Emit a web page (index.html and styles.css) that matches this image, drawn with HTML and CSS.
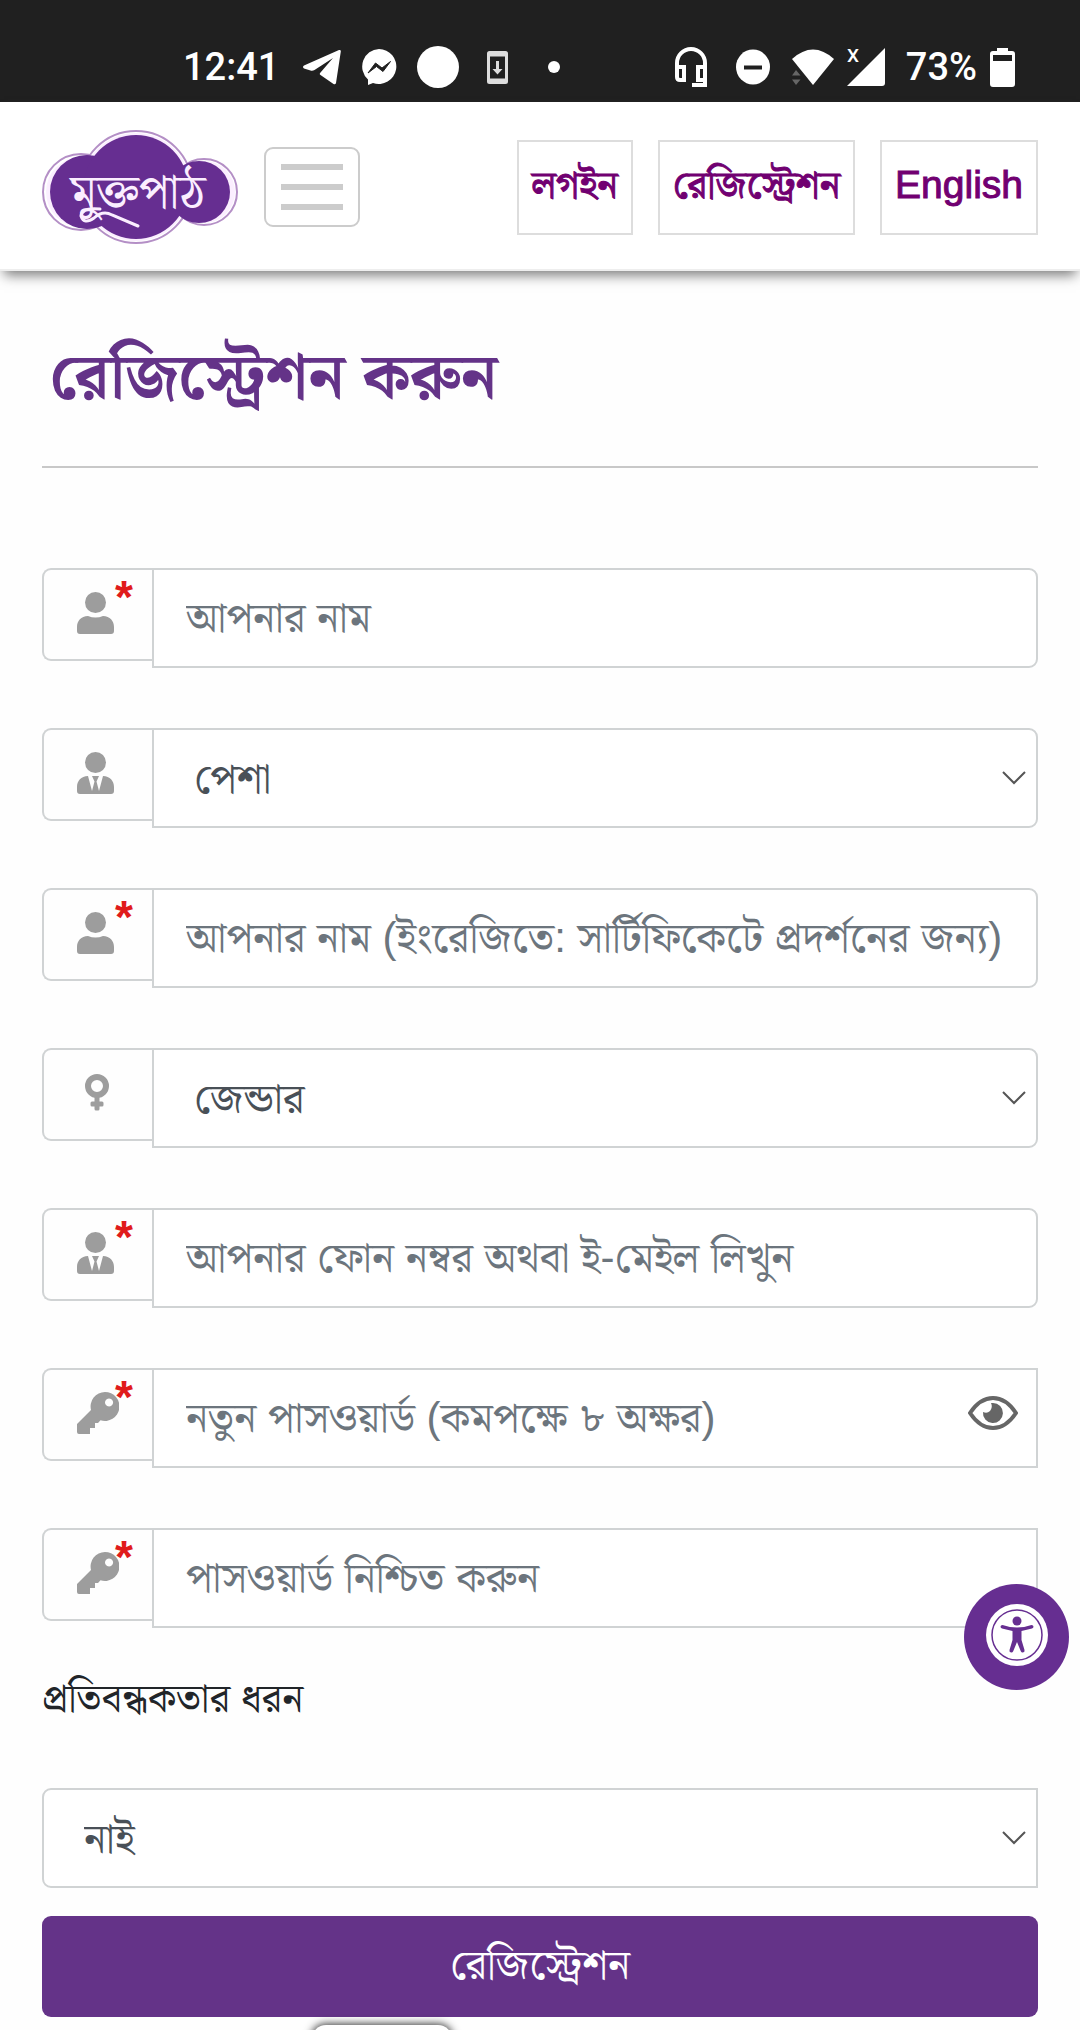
FILE: index.html
```html
<!DOCTYPE html>
<html lang="bn">
<head>
  <meta charset="UTF-8">
  <meta name="viewport" content="width=device-width, initial-scale=1">
  <title>রেজিস্ট্রেশন করুন</title>
  <link rel="stylesheet" href="styles.css">
</head>
<body>

<svg class="sprite" aria-hidden="true">
  <symbol id="user" viewBox="0 0 37 42">
    <circle cx="18.500" cy="10.500" r="10.500"/>
    <path d="M11 24q7.500 3 15 0c7 0 11 5 11 11v4q0 3-3 3H3q-3 0-3-3v-4c0-6 4-11 11-11z"/>
  </symbol>
  <symbol id="tie" viewBox="0 0 37 42">
    <circle cx="18.500" cy="10.500" r="10.500"/>
    <path d="M11 24l4 15 2.500-9.500L15 24h7l-2.500 5.500L22 39l4-15c7 0 11 5 11 11v4q0 3-3 3H3q-3 0-3-3v-4c0-6 4-11 11-11z"/>
    <path d="M18.500 30l-3 12h6z"/>
  </symbol>
  <symbol id="key" viewBox="0 0 42 42">
    <path fill-rule="evenodd" d="M28 0a14.500 14.500 0 1 1-4.500 28.300L21 31h-3v5h-5v6H2q-2 0-2-2v-8l14-14A14.500 14.500 0 0 1 28 0zm4 6.500a4 4 0 1 0 0.100 0z"/>
  </symbol>
  <symbol id="female" viewBox="0 0 24 37">
    <circle cx="12" cy="12" r="9" fill="none" stroke="currentColor" stroke-width="6"/>
    <path d="M9.500 22h5v5.500H17q1.500 0 1.500 1.500v2q0 1.500-1.500 1.500h-2.500V35q0 1.500-1.500 1.500h-2q-1.500 0-1.500-1.500v-2.500H7q-1.500 0-1.500-1.500v-2q0-1.500 1.500-1.500h2.500z"/>
  </symbol>
</svg>

<div class="status">
  <div class="status-left">
    <span class="clock">12:41</span>
    <svg width="38" height="36" viewBox="0 0 38 36"><path d="M1 16.500L36 1q2-.5 1.800 1.500L33 34q-.6 2-2.500 1L17.500 26q-1.500-1 0-2.500L30 9 11.500 21q-2 1.200-4 .5L1 19.500q-2-1.500 0-3z"/></svg>
    <svg width="36" height="36" viewBox="0 0 36 36"><path d="M18 0a17.500 17.500 0 1 1-6 34l-5 2V30.500A17.500 17.500 0 0 1 18 0z"/><path d="M7 24l7.500-10 6.500 5 8.500-6.500-7.500 10-6.500-5z" fill="#202020" stroke="#202020"/></svg>
    <svg width="42" height="42" viewBox="0 0 42 42"><circle cx="21" cy="21" r="21"/></svg>
    <svg class="update" width="21" height="33" viewBox="0 0 21 33"><path fill-rule="evenodd" d="M2.500 0h16Q21 0 21 2.500v28Q21 33 18.500 33h-16Q0 33 0 30.500v-28Q0 0 2.500 0zM3 5.500v22h15v-22z"/><path d="M9 10h3v8h3.500l-5 5.500-5-5.500H9z"/></svg>
    <svg class="dot" width="12" height="12" viewBox="0 0 12 12"><circle cx="6" cy="6" r="6"/></svg>
  </div>
  <div class="status-right">
    <svg width="32" height="40" viewBox="0 0 32 40"><path d="M2 20v-4a14 14 0 0 1 28 0v22H17M2 20h7v13H5q-3 0-3-3zm28 0h-7v13h7" fill="none" stroke="#fff" stroke-width="4"/></svg>
    <svg class="dnd" width="34" height="36" viewBox="0 0 34 36"><ellipse cx="17" cy="18" rx="17" ry="17.500"/><path d="M8 16.500h18v4H8z" fill="#202020"/></svg>
    <svg class="wifi" width="42" height="36" viewBox="0 0 42 36"><path d="M0 10Q21-9 42 10L21 36z"/><path d="M4 21l4.500 5.500H0zM4 36l4.500-5.500H0z" fill="#666"/></svg>
    <svg class="signal" width="38" height="40" viewBox="0 0 38 40"><path d="M38 1v35q0 3-3 3H0z"/><text x="0" y="15" font-size="19">X</text></svg>
    <span class="percent">73%</span>
    <svg width="25" height="39" viewBox="0 0 25 39"><path fill-rule="evenodd" d="M7 0h11v3h4q3 0 3 3v30q0 3-3 3H3q-3 0-3-3V6q0-3 3-3h4zM3 7v6h19V7z"/></svg>
  </div>
</div>

<header class="navbar">
  <a href="#" class="logo" aria-label="মুক্তপাঠ">
    <svg width="196" height="115" viewBox="0 0 196 115">
      <g fill="#fff" stroke="#b48fc6" stroke-width="2">
        <circle cx="39" cy="62" r="38"/><circle cx="162" cy="62" r="33"/><ellipse cx="94" cy="57" rx="56" ry="56"/>
      </g>
      <g fill="#fbeeff"><circle cx="39" cy="62" r="35"/><circle cx="162" cy="62" r="31"/><circle cx="94" cy="57" r="54"/></g>
      <g fill="#662e91"><circle cx="45" cy="62" r="37"/><circle cx="157" cy="62" r="31"/><circle cx="94" cy="57" r="52"/></g>
      <text class="logo-text" x="96" y="78" text-anchor="middle">মুক্তপাঠ</text>
      <path d="M58 79q-18-2-19 7 3 9 13 2 9-8 18-3l26 11" fill="none" stroke="#fbeeff" stroke-width="3" stroke-linecap="round"/>
    </svg>
  </a>
  <button class="toggler" type="button" aria-label="মেনু"><span></span><span></span><span></span></button>
  <nav class="links">
    <a href="#">লগইন</a>
    <a href="#">রেজিস্ট্রেশন</a>
    <a href="#">English</a>
  </nav>
</header>

<main class="container">
  <h1>রেজিস্ট্রেশন করুন</h1>
  <form>
    <div class="group">
      <label class="addon" for="name"><svg width="37" height="42"><use href="#user"/></svg><span class="req">*</span></label>
      <input class="control" id="name" type="text" placeholder="আপনার নাম">
    </div>
    <div class="group">
      <label class="addon" for="job"><svg width="37" height="42"><use href="#tie"/></svg></label>
      <select class="control" id="job"><option>পেশা</option></select>
    </div>
    <div class="group">
      <label class="addon" for="name_en"><svg width="37" height="42"><use href="#user"/></svg><span class="req">*</span></label>
      <input class="control" id="name_en" type="text" placeholder="আপনার নাম (ইংরেজিতে: সার্টিফিকেটে প্রদর্শনের জন্য)">
    </div>
    <div class="group">
      <label class="addon gender" for="gender"><svg width="24" height="37"><use href="#female"/></svg></label>
      <select class="control" id="gender"><option>জেন্ডার</option></select>
    </div>
    <div class="group">
      <label class="addon" for="contact"><svg width="37" height="42"><use href="#tie"/></svg><span class="req">*</span></label>
      <input class="control" id="contact" type="text" placeholder="আপনার ফোন নম্বর অথবা ই-মেইল লিখুন">
    </div>
    <div class="group">
      <label class="addon" for="password"><svg width="42" height="42"><use href="#key"/></svg><span class="req">*</span></label>
      <input class="control square" id="password" type="password" placeholder="নতুন পাসওয়ার্ড (কমপক্ষে ৮ অক্ষর)">
      <button class="eye" type="button" aria-label="পাসওয়ার্ড দেখুন">
        <svg width="50" height="34" viewBox="0 0 50 34"><path d="M2 17Q12 2 25 2t23 15Q38 32 25 32T2 17z" fill="none" stroke="#666" stroke-width="4"/><path d="M25 7a10 10 0 1 1-10 9q4 2 7-1 3-4 1-8z" fill="#666"/></svg>
      </button>
    </div>
    <div class="group">
      <label class="addon" for="confirm"><svg width="42" height="42"><use href="#key"/></svg><span class="req">*</span></label>
      <input class="control square" id="confirm" type="password" placeholder="পাসওয়ার্ড নিশ্চিত করুন">
    </div>

    <label class="title" for="disability">প্রতিবন্ধকতার ধরন</label>
    <select class="control disability" id="disability"><option>নাই</option></select>
    <button class="submit" type="submit">রেজিস্ট্রেশন</button>
  </form>
</main>

<button class="access" type="button" aria-label="Accessibility">
  <svg width="62" height="62" viewBox="0 0 62 62">
    <circle cx="31" cy="31" r="31" fill="#fff"/>
    <circle cx="31" cy="31" r="25" fill="none" stroke="#662e91" stroke-width="1.500"/>
    <g fill="#662e91"><circle cx="31" cy="17" r="4.500"/><path d="M16.500 21q7.500 2.500 14.500 2.500T45.500 21q2 0 2 1.800 0 1.200-1.500 1.700L35.500 27v9l3 10q.5 2-1.500 2.500-1.500.3-2.200-1.200L31 38l-3.800 9.300q-.7 1.500-2.200 1.200-2-.5-1.500-2.500l3-10v-9L16 24.500q-1.500-.5-1.500-1.700 0-1.800 2-1.800z"/></g>
  </svg>
</button>
<div class="sheet"></div>

</body>
</html>
```
FILE: styles.css
```css
* {
  box-sizing: border-box;
}
body {
  margin: 0;
  background: #fefefe;
  font-family: "Liberation Sans", "Noto Serif Bengali", "Noto Sans Bengali", sans-serif;
  font-size: 42px;
  color: #212529;
  overflow: hidden;
}
.sprite {
  display: none;
}

/* phone status bar */
.status {
  display: flex;
  justify-content: space-between;
  height: 102px;
  padding: 32px 65px 0 183px;
  background: #202020;
  color: #fff;
  fill: #fff;
  font: 500 38px Roboto, sans-serif;
}
.status-left, .status-right {
  display: flex;
  align-items: center;
}
.status-left {
  gap: 20px;
}
.clock {
  margin-right: 4px;
}
.update {
  fill: #ddd;
  margin: 0 20px 0 8px;
}
.status-right {
  gap: 13px;
}
.dnd {
  margin: 0 9px 0 16px;
}
.signal {
  overflow: visible;
}
.percent {
  margin-left: 8px;
}

/* header */
.navbar {
  display: flex;
  align-items: center;
  height: 169px;
  padding: 3px 42px 0;
  background: #fff;
  border-bottom: 2px solid #eee;
  box-shadow: 0 8px 12px -4px #777;
}
.logo svg {
  display: block;
}
.logo-text {
  fill: #fbeeff;
  font-size: 48px;
}
.toggler {
  display: flex;
  flex-direction: column;
  justify-content: space-between;
  width: 96px;
  height: 80px;
  margin-left: 26px;
  padding: 15px;
  border: 2px solid #ccc;
  border-radius: 9px;
  background: #fff;
}
.toggler span {
  height: 6px;
  background: #ccc;
}
.links {
  display: flex;
  gap: 25px;
  margin-left: auto;
}
.links a {
  height: 95px;
  padding: 0 13px;
  border: 2px solid #ddd;
  font-size: 39px;
  line-height: 86px;
  color: #710071;
  text-decoration: none;
  -webkit-text-stroke: 1px #710071;
}

/* form */
.container {
  padding: 0 42px;
}
h1 {
  height: 197px;
  margin: 0 0 100px;
  padding: 0 8px;
  border-bottom: 2px solid #c8c8c8;
  font-size: 64px;
  line-height: 210px;
  color: #643388;
}
.group {
  display: flex;
  align-items: flex-start;
  position: relative;
  margin-bottom: 60px;
}
.addon {
  display: flex;
  position: relative;
  flex: none;
  width: 110px;
  height: 93px;
  padding: 22px 0 0 33px;
  border: 2px solid #d0d3d4;
  border-right: 0;
  border-radius: 9px 0 0 9px;
  color: #9d9d9d;
  fill: #9d9d9d;
}
.gender {
  padding: 24px 0 0 41px;
}
.req {
  position: absolute;
  top: 6px;
  left: 71px;
  font-size: 46px;
  font-weight: bold;
  line-height: 42px;
  color: #e01b1b;
}
.control {
  flex: 1;
  min-width: 0;
  height: 100px;
  padding: 0 32px;
  border: 2px solid #d0d3d4;
  border-radius: 0 9px 9px 0;
  background: #fff;
  font: inherit;
  color: #495057;
}
.control::placeholder {
  color: #6c757d;
  opacity: 1;
}
.square {
  border-radius: 0;
}
select.control {
  appearance: none;
  padding: 0 40px;
  background: #fff url("data:image/svg+xml,%3Csvg xmlns='http://www.w3.org/2000/svg' width='24' height='14'%3E%3Cpath d='M1 1l11 11L23 1' fill='none' stroke='%23555' stroke-width='2'/%3E%3C/svg%3E") no-repeat right 10px center;
}
.eye {
  position: absolute;
  top: 28px;
  right: 20px;
  padding: 0;
  border: 0;
  background: none;
}
.eye svg {
  display: block;
}
.title {
  display: block;
  height: 130px;
  margin-top: -30px;
  font-size: 40px;
  line-height: 80px;
}
select.disability {
  display: block;
  width: 100%;
  border-radius: 9px 0 0 9px;
}
.submit {
  display: block;
  width: 100%;
  height: 101px;
  margin-top: 28px;
  border: 0;
  border-radius: 9px;
  background: #643388;
  font: inherit;
  color: #fff;
}

/* floating parts */
.access {
  position: fixed;
  right: 11px;
  bottom: 340px;
  display: flex;
  align-items: center;
  justify-content: center;
  width: 105px;
  height: 106px;
  padding: 0 0 4px;
  border: 0;
  border-radius: 50%;
  background: #662e91;
}
.sheet {
  position: fixed;
  bottom: -55px;
  left: 312px;
  width: 140px;
  height: 60px;
  border-radius: 14px;
  background: #fff;
  box-shadow: 0 0 8px 1px #333;
}
```
